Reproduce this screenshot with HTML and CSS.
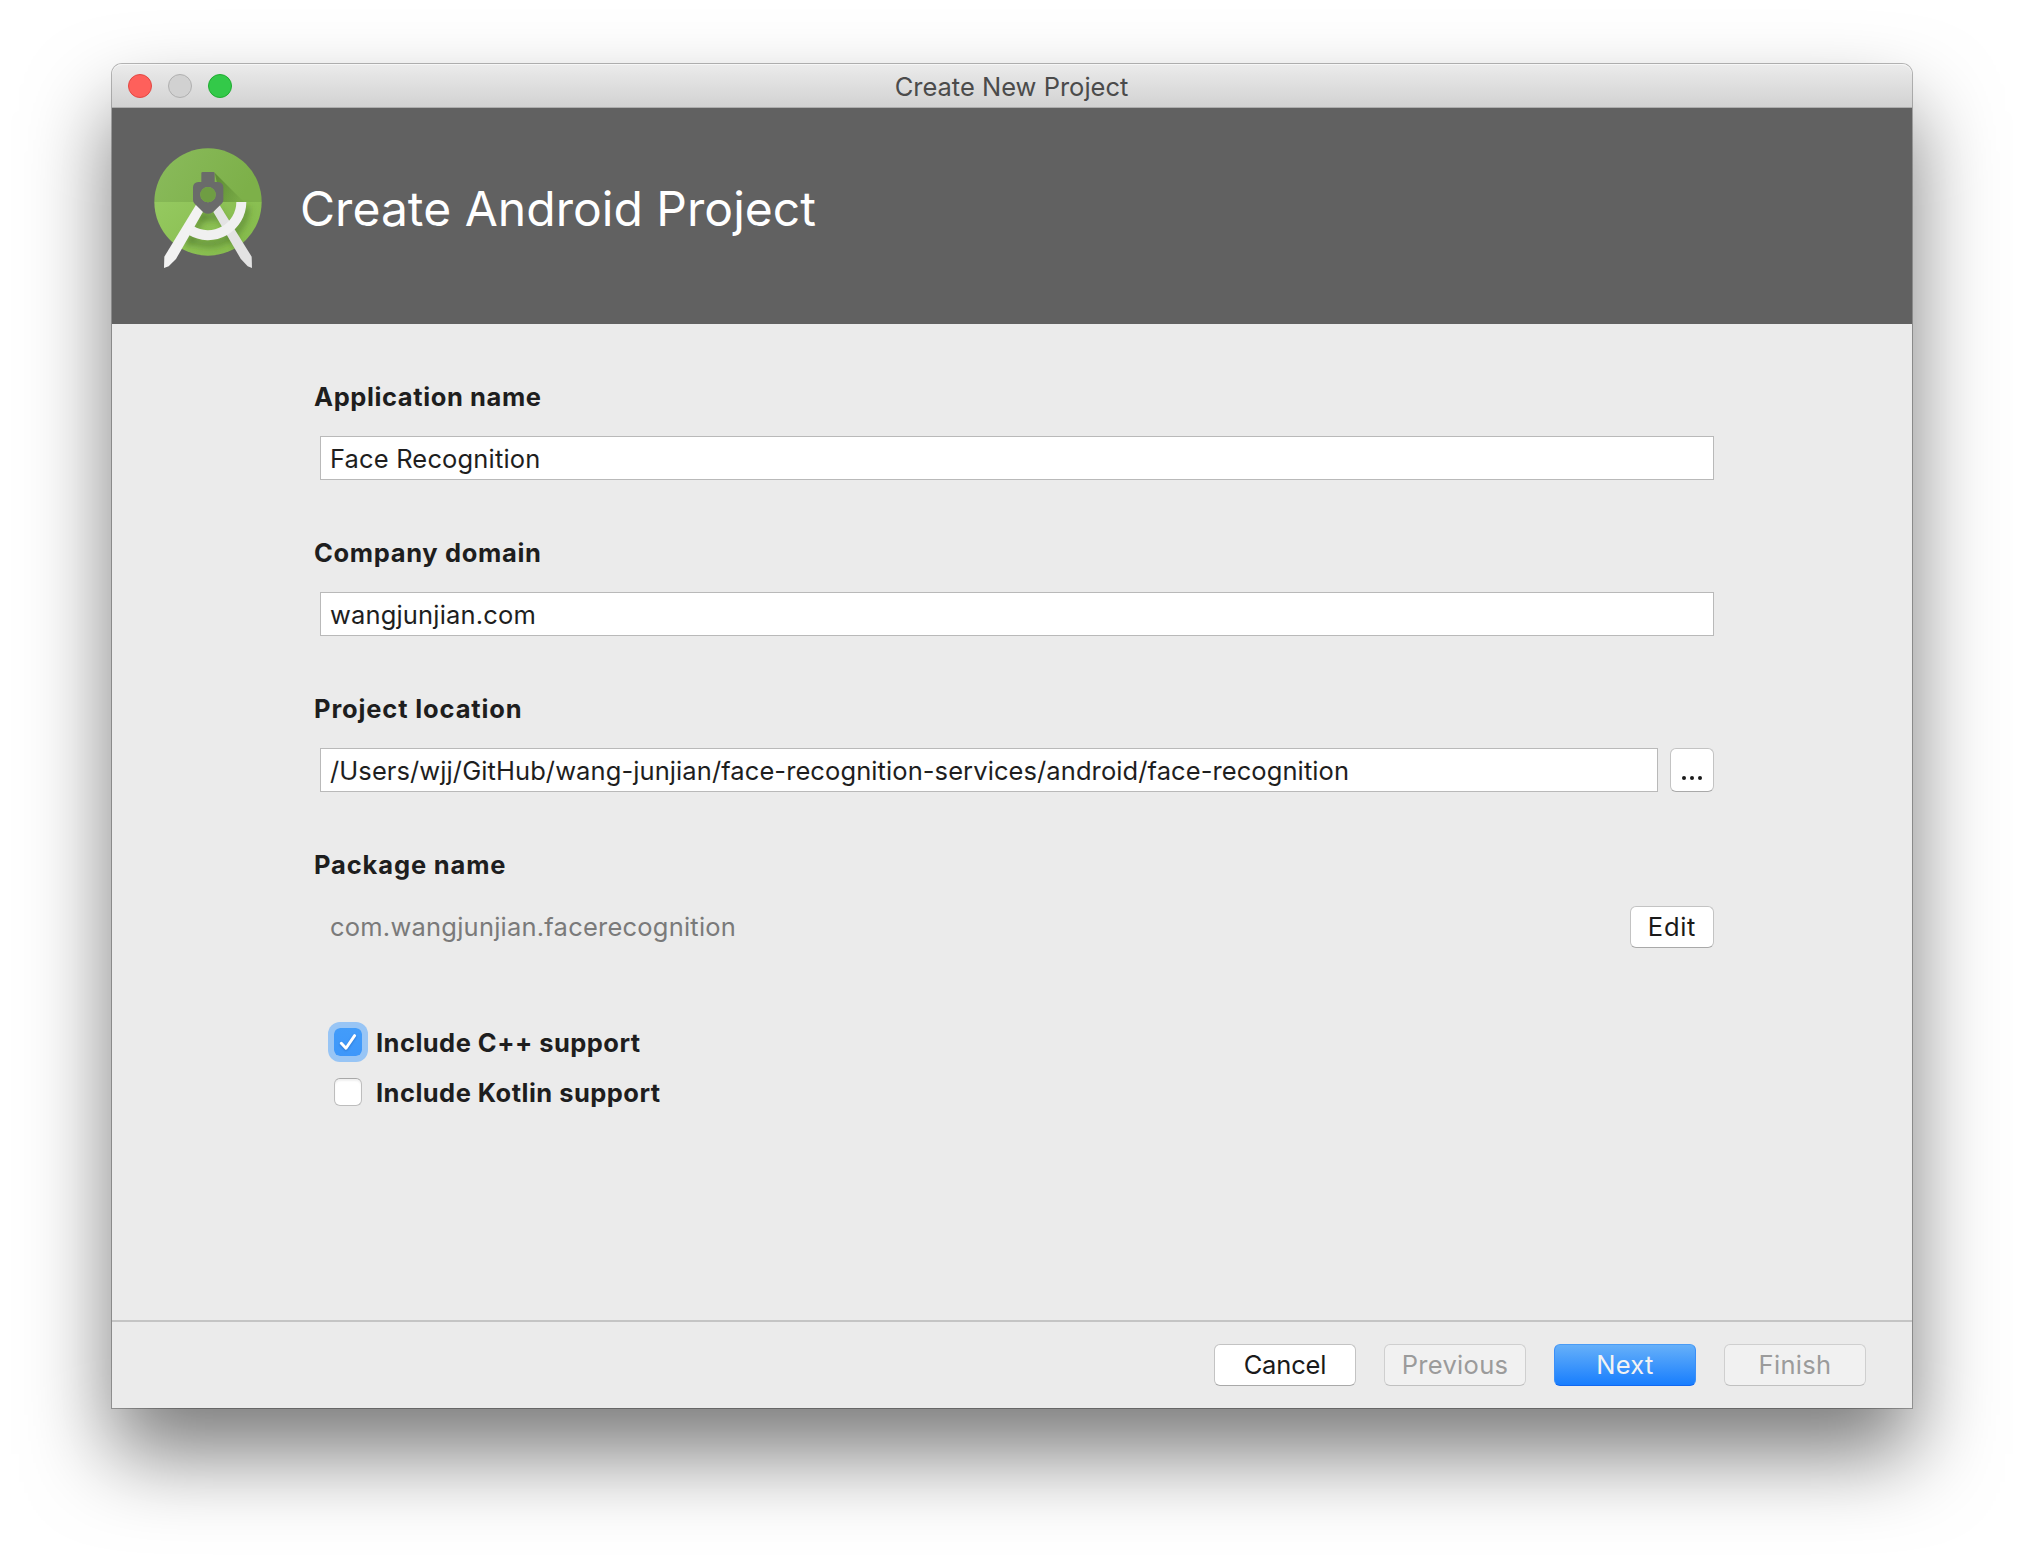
FILE: index.html
```
<!DOCTYPE html>
<html lang="en">
<head>
<meta charset="utf-8">
<title>Create New Project</title>
<link rel="stylesheet" href="styles.css">
</head>
<body>
<main class="window">
  <header class="titlebar">
    <div class="lights">
      <span class="light light-close"></span>
      <span class="light light-min"></span>
      <span class="light light-zoom"></span>
    </div>
    <span class="title">Create New Project</span>
  </header>

  <section class="banner">
    <svg class="logo" viewBox="150 279 348 390" aria-hidden="true">
      <defs>
        <linearGradient id="top" x1="0" y1="0" x2="1" y2="0.3">
          <stop offset="0" stop-color="#8abb5c"/>
          <stop offset="1" stop-color="#7db049"/>
        </linearGradient>
        <linearGradient id="bottom" x1="0" y1="0" x2="1" y2="0.6">
          <stop offset="0" stop-color="#95c960"/>
          <stop offset="1" stop-color="#86bb4c"/>
        </linearGradient>
        <linearGradient id="cast" gradientUnits="userSpaceOnUse" x1="345" y1="400" x2="425" y2="440">
          <stop offset="0" stop-color="#3f6a1d" stop-opacity=".5"/>
          <stop offset="1" stop-color="#3f6a1d" stop-opacity=".08"/>
        </linearGradient>
        <clipPath id="disc"><circle cx="324" cy="455" r="161"/></clipPath>
        <filter id="soft" x="-20%" y="-20%" width="150%" height="150%"><feGaussianBlur stdDeviation="9"/></filter>
      </defs>
      <path d="M163 456A161 161 0 0 1 485 456Z" fill="url(#top)"/>
      <path d="M163 456A161 161 0 0 0 485 456Z" fill="url(#bottom)"/>
      <g clip-path="url(#disc)">
        <path d="M344 368L432 456H364Z" fill="url(#cast)"/>
        <g filter="url(#soft)" fill="none" stroke="#41691f" stroke-opacity=".45">
          <path d="M438 470A114 114 0 0 1 270 568" stroke-width="24"/>
          <path d="M312 490L262 585M350 480L430 620" stroke-width="20"/>
          <path d="M300 500H350" stroke-width="26"/>
        </g>
      </g>
      <path d="M358 464L340 486L422 626L443 649L456 654L455 620Z" fill="#e3e3e3"/>
      <path d="M289 463L309 485L228 627L206 649L192 654L193 620Z" fill="#f2f2f2"/>
      <path d="M424 456A100 100 0 0 1 272 541" fill="none" stroke="#f0f0f0" stroke-width="30"/>
      <path fill-rule="evenodd" fill="#6a6b6a" d="M304 370Q304 366 308 366H340Q344 366 344 370V396H354Q369 397 370 412V450Q370 457 365 461L338 487Q324 496 310 487L284 461Q279 457 279 450V412Q280 397 295 396H304ZM324 411A23 23 0 1 0 324 457A23 23 0 1 0 324 411Z"/>
      <circle cx="324" cy="434" r="23" fill="#6f9d43"/>
    </svg>
    <h1 class="heading">Create Android Project</h1>
  </section>

  <section class="form">
    <div class="group">
      <label class="label label-app">Application name</label>
      <div class="row"><div class="field">Face Recognition</div></div>
    </div>
    <div class="group">
      <label class="label label-company">Company domain</label>
      <div class="row"><div class="field">wangjunjian.com</div></div>
    </div>
    <div class="group">
      <label class="label">Project location</label>
      <div class="row">
        <div class="field field-path">/Users/wjj/GitHub/wang-junjian/face-recognition-services/android/face-recognition</div>
        <button class="button browse" aria-label="Browse"><i class="dot"></i><i class="dot"></i><i class="dot"></i></button>
      </div>
    </div>
    <div class="group">
      <label class="label">Package name</label>
      <div class="row row-package">
        <span class="package">com.wangjunjian.facerecognition</span>
        <button class="button edit">Edit</button>
      </div>
    </div>
    <div class="options">
      <div class="option">
        <span class="check check-on">
          <svg class="tick" viewBox="0 0 28 28" aria-hidden="true"><path d="M7.3 15.2L12 20.3L20.6 7.6" fill="none" stroke="#fff" stroke-width="2.9" stroke-linecap="round" stroke-linejoin="round"/></svg>
        </span>
        <span class="option-text">Include C++ support</span>
      </div>
      <div class="option">
        <span class="check"></span>
        <span class="option-text">Include Kotlin support</span>
      </div>
    </div>
  </section>

  <footer class="footer">
    <button class="button cancel">Cancel</button>
    <button class="button disabled">Previous</button>
    <button class="button primary">Next</button>
    <button class="button disabled">Finish</button>
  </footer>
</main>
</body>
</html>
```
FILE: styles.css
```
* { box-sizing: border-box; }

body {
  margin: 0;
  width: 2024px;
  height: 1568px;
  padding: 64px 112px 160px;
  overflow: hidden;
  background: #fff;
  font-family: Inter, "Liberation Sans", sans-serif;
  font-size: 25.5px;
  line-height: 30px;
  color: #1e1e1e;
}

.window {
  display: flex;
  flex-direction: column;
  width: 1800px;
  height: 1344px;
  background: #ebebeb;
  border-radius: 10px 10px 0 0;
  box-shadow: 0 0 0 1px rgba(0, 0, 0, .27), 0 46px 84px rgba(0, 0, 0, .52);
}

/* Title bar */
.titlebar {
  display: grid;
  grid-template-columns: 1fr auto 1fr;
  align-items: center;
  height: 44px;
  padding: 0 16px;
  border-radius: 10px 10px 0 0;
  border-bottom: 1px solid #adadad;
  background: linear-gradient(#ebebeb, #d2d2d2);
  box-shadow: inset 0 1px 0 #f6f6f6;
}

.lights { display: flex; gap: 16px; padding-top: 1px; }

.light {
  width: 24px;
  height: 24px;
  border: 1px solid;
  border-radius: 50%;
}
.light-close { background: #fe605b; border-color: #e24843; }
.light-min { background: #d1d1d1; border-color: #b0b0b0; }
.light-zoom { background: #33c949; border-color: #1fac30; }

.title {
  padding: 2px 1px 0 0;
  color: #4b4b4b;
}

/* Banner */
.banner {
  display: flex;
  align-items: center;
  height: 216px;
  padding: 0 0 16px 38px;
  background: #616161;
}

.logo { width: 116px; height: 130px; }

.heading {
  margin: 0;
  padding: 1px 0 0 34px;
  font-size: 48px;
  font-weight: 400;
  line-height: 56px;
  letter-spacing: .03px;
  color: #fff;
}

/* Form */
.form {
  flex: 1;
  display: flex;
  flex-direction: column;
  gap: 58px;
  padding: 58px 198px 0 202px;
}

.group { display: flex; flex-direction: column; gap: 24px; }

.label {
  font-weight: 700;
  letter-spacing: .86px;
}
.label-app { letter-spacing: .6px; }
.label-company { letter-spacing: .66px; }

.row {
  display: flex;
  gap: 12px;
  height: 44px;
  padding-left: 6px;
}
.row-package {
  align-items: flex-end;
  justify-content: space-between;
}

.field {
  flex: 1;
  padding: 7px 9px;
  border: 1px solid #b9b9b9;
  background: #fff;
  letter-spacing: .16px;
  white-space: nowrap;
}
.field-path { letter-spacing: .09px; }

.package {
  padding-left: 10px;
  line-height: 42px;
  letter-spacing: .22px;
  color: #7a7a7a;
}

.button {
  display: flex;
  align-items: center;
  justify-content: center;
  width: 142px;
  height: 42px;
  padding: 0;
  border: 1px solid #c3c3c3;
  border-bottom-color: #a9a9a9;
  border-radius: 6px;
  background: #fff;
  font: inherit;
  letter-spacing: .3px;
  color: #1a1a1a;
}
.browse {
  align-items: flex-end;
  gap: 4px;
  width: 44px;
  height: 44px;
  padding-bottom: 11px;
}
.dot {
  width: 4px;
  height: 4px;
  border-radius: 50%;
  background: #1a1a1a;
}
.edit { width: 84px; letter-spacing: .7px; }
.cancel { letter-spacing: -.15px; }
.disabled {
  border-color: #cfcfcf;
  border-bottom-color: #c0c0c0;
  background: #f1f1f1;
  color: #9b9b9b;
}
.primary {
  border-color: #4a9cf5 #3a8ff8 #1168f0;
  background: linear-gradient(#66b0f9, #187efe);
  color: #f3f3f3;
}

/* Checkboxes */
.options {
  display: flex;
  flex-direction: column;
  gap: 22px;
  margin-top: 22px;
  padding-left: 20px;
}

.option {
  display: flex;
  align-items: center;
  gap: 14px;
  height: 28px;
}

.option-text {
  padding-top: 1px;
  font-weight: 700;
  letter-spacing: .46px;
}

.check {
  width: 28px;
  height: 28px;
  border: 1px solid #bdbdbd;
  border-top-color: #a8a8a8;
  border-radius: 6px;
  background: #fff;
  box-shadow: inset 0 2px 2px rgba(0, 0, 0, .06);
}
.check-on {
  border: 0;
  background: linear-gradient(#429cfa, #3e97fa);
  box-shadow: 0 0 0 6px #98c5f5;
}
.tick {
  display: block;
  width: 28px;
  height: 28px;
  filter: drop-shadow(0 1px 1px rgba(0, 50, 130, .35));
}

/* Footer */
.footer {
  display: flex;
  gap: 28px;
  justify-content: flex-end;
  height: 88px;
  padding: 22px 46px 0 0;
  border-top: 2px solid #c4c4c4;
}
```
